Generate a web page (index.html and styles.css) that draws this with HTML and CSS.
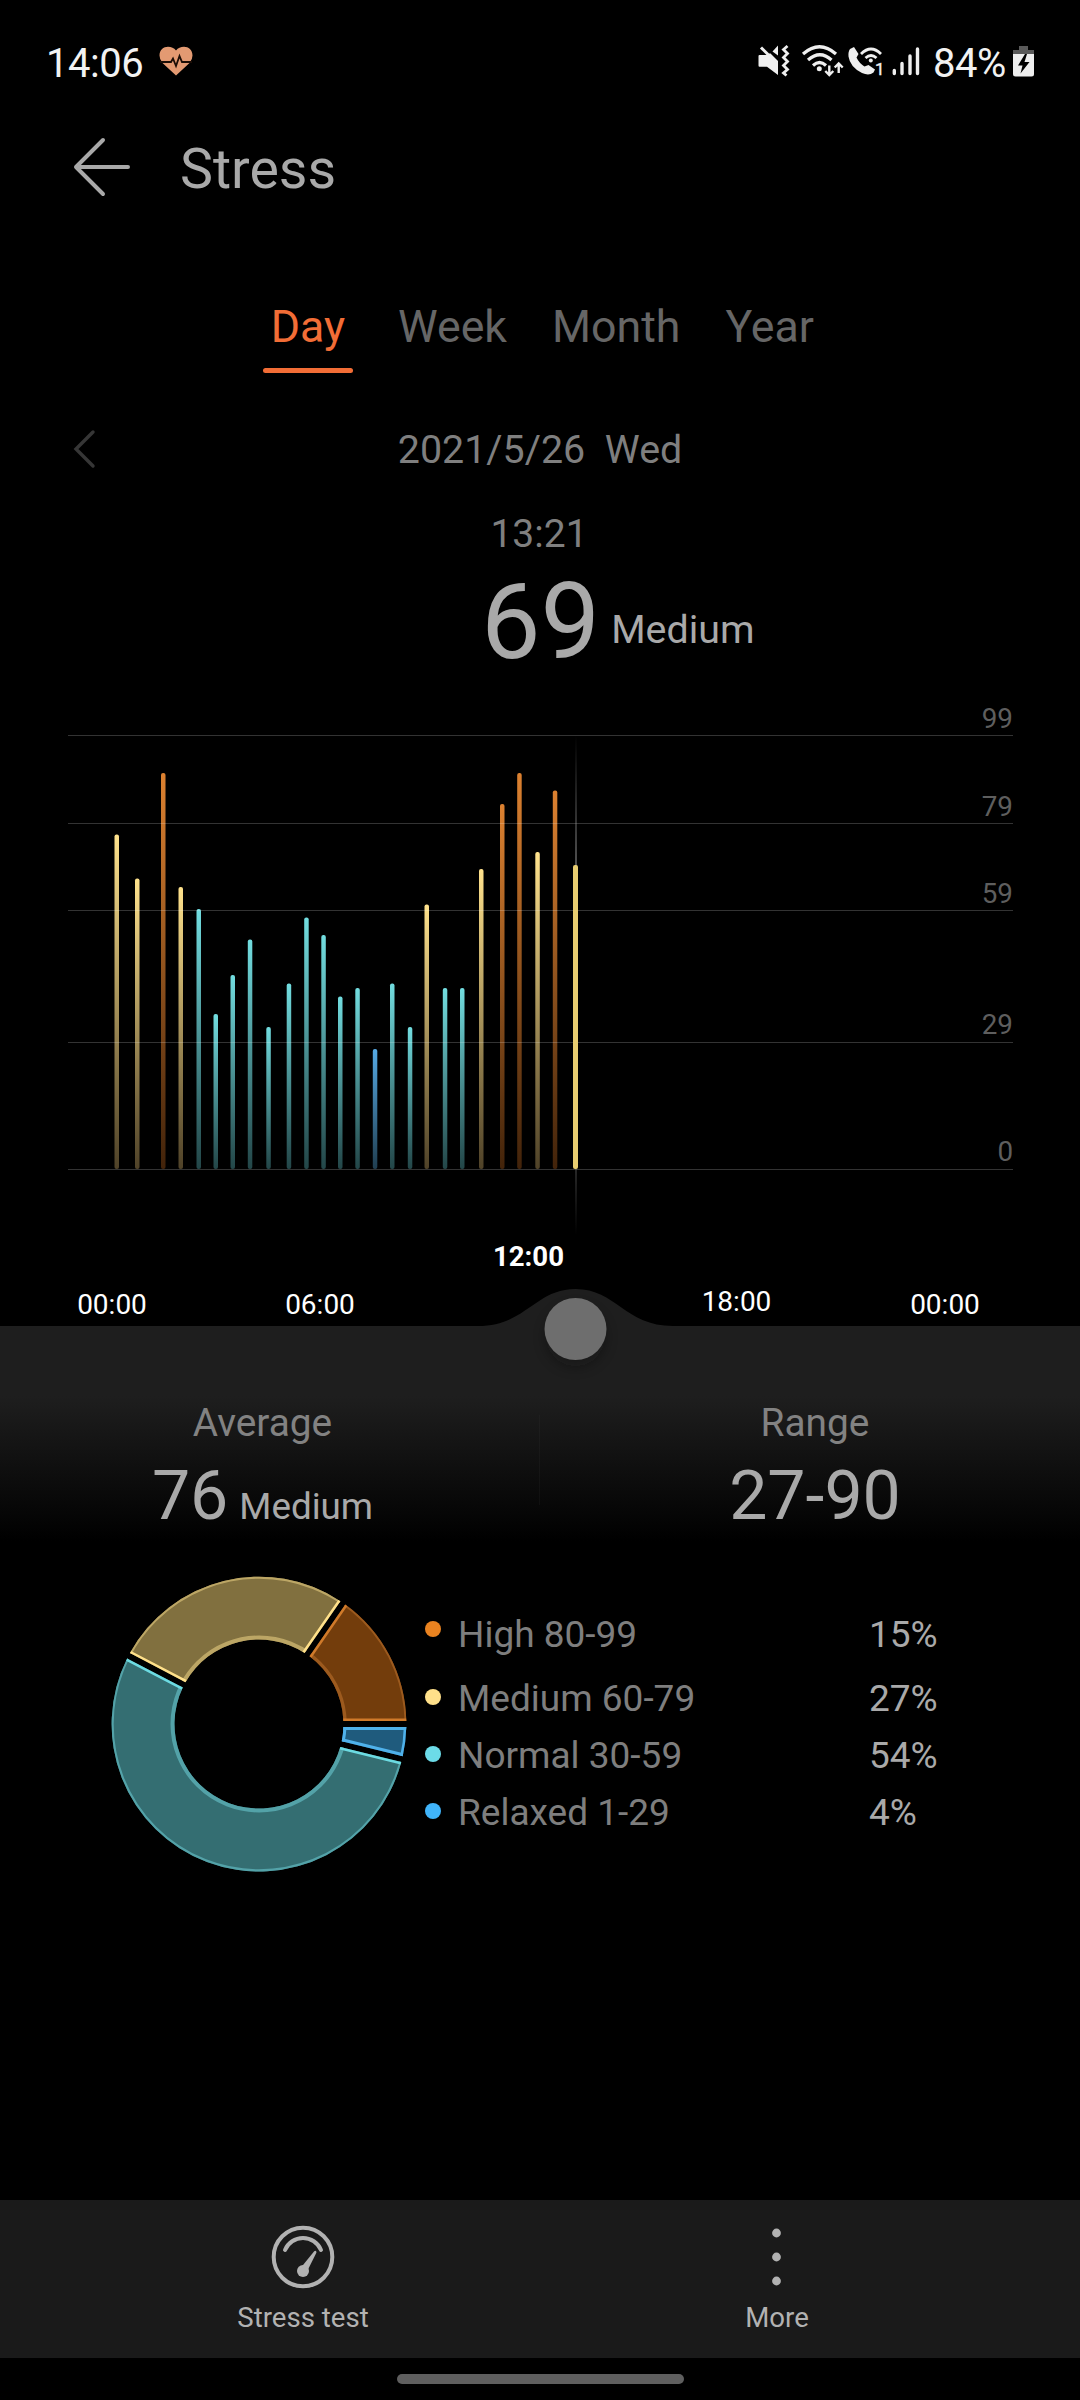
FILE: index.html
```html
<!DOCTYPE html>
<html lang="en">
<head>
<meta charset="utf-8">
<title>Stress</title>
<link rel="stylesheet" href="styles.css">
</head>
<body>
<div class="screen">
  <header class="status">
    <span class="clock">14:06</span>
    <svg class="heart" width="34" height="30" viewBox="0 0 34 30"><path d="M17 29.500L3.500 17Q.5 13.500.5 9.500C.5 4 4.500.8 9 .8Q14 .8 17 4.500Q20 .8 25 .8C29.500.8 33.500 4 33.500 9.500Q33.500 13.500 30.500 17Z" fill="#e39a72"/><path d="M1 16H12L14 12.500L17 20L20.500 10L23 16H33" fill="none" stroke="#1b0d06" stroke-width="1.800"/></svg>
    <svg class="sys" width="164" height="34" viewBox="0 0 164 34" fill="none" stroke="#efefef">
      <path d="M1.500 12H8L20 7V32L9 23.700H1.500Q.5 23.700.5 22.500V13Q.5 12 1.500 12Z" fill="#efefef" stroke="none"/>
      <path d="M4.500 2.500L21 19V0H6Z" fill="#000" stroke="none"/>
      <path d="M3 4.500L19 20.500" stroke-width="3"/>
      <path d="M14.500 8.500L20 2.500V12.500Z" fill="#efefef" stroke="none"/>
      <path d="M29.500 3L25.500 6.500L29.500 10.500L25.500 14.500L29.500 18.500L25.500 22.500L29.500 26.500L25.500 30L28.500 32.500" stroke-width="2.800"/>
      <path d="M45 11Q61.500 -3.500 78 11M50 17Q62 6.500 73.500 17M55 22.500Q61.500 16.500 68 22.500" stroke-width="3.200"/>
      <circle cx="61.300" cy="25.700" r="2.500" fill="#efefef" stroke="none"/>
      <path d="M71.300 22.500V31.500M67.300 28L71.300 32L75.300 28M80.700 30V20.500M76.700 24.500L80.700 20.500L84.700 24.500" stroke-width="2.400"/>
      <path d="M92 6L96 4L100.500 11L98.500 14.500Q101 20 106.500 23.500L110.500 22L117 26.500L115.500 29.500Q111 33 104 30Q92 24 90.500 13.500Q90 8.500 92 6Z" fill="#efefef" stroke="none"/>
      <path d="M103 11Q113 1 123 11M107.500 15Q113 10 118.500 15" stroke-width="2.800"/>
      <circle cx="112.800" cy="17.500" r="2" fill="#efefef" stroke="none"/>
      <text class="sim" x="117" y="31.500">1</text>
      <g stroke-width="3.400" stroke-linecap="round"><path d="M136.300 27.500V30.500M144 20.500V30.500M152 13V30.500M159.500 6V30.500"/></g>
    </svg>
    <span class="battery-text">84%</span>
    <svg class="battery" width="21" height="32" viewBox="0 0 21 32"><path d="M6 1H15V5H21V9H0V5H6Z" fill="#5a5a5a"/><path d="M0 9H21V29Q21 31.500 18.500 31.500H2.500Q0 31.500 0 29Z" fill="#efefef"/><path d="M12 9L5 20.500H9.500L7.500 28.500L16.500 17H11.500L14 9Z" fill="#000"/></svg>
  </header>

  <div class="titlebar">
    <svg width="60" height="60" viewBox="0 0 60 60" fill="none" stroke="#a9a9a9" stroke-width="4" stroke-linecap="round" stroke-linejoin="round"><path d="M31 3L4 30L31 57M4 30H56"/></svg>
    <h1>Stress</h1>
  </div>

  <nav class="tabs">
    <span class="tab active">Day</span><span class="tab">Week</span><span class="tab">Month</span><span class="tab">Year</span>
  </nav>

  <div class="date-row">
    <svg class="prev" width="24" height="40" viewBox="0 0 24 40" fill="none" stroke="#363636" stroke-width="3.400" stroke-linecap="round"><path d="M20 3L3 20L20 37"/></svg>
    <span class="date">2021/5/26&nbsp; Wed</span>
  </div>
  <div class="time">13:21</div>
  <div class="reading"><span class="score">69</span><span class="level">Medium</span></div>

  <svg class="chart" width="1080" height="696" viewBox="0 690 1080 696">
    <defs>
      <linearGradient id="y" x1="0" y1="0" x2="0" y2="1"><stop offset="0" stop-color="#ffe28c"/><stop offset="1" stop-color="#4f4228"/></linearGradient>
      <linearGradient id="o" x1="0" y1="0" x2="0" y2="1"><stop offset="0" stop-color="#dc8130"/><stop offset="1" stop-color="#42230a"/></linearGradient>
      <linearGradient id="t" x1="0" y1="0" x2="0" y2="1"><stop offset="0" stop-color="#72dde0"/><stop offset="1" stop-color="#234648"/></linearGradient>
      <linearGradient id="b" x1="0" y1="0" x2="0" y2="1"><stop offset="0" stop-color="#55a9e4"/><stop offset="1" stop-color="#203e50"/></linearGradient>
      <linearGradient id="cursor" x1="0" y1="0" x2="0" y2="1"><stop offset="0" stop-color="#999" stop-opacity="0"/><stop offset=".4" stop-color="#aaa"/><stop offset=".6" stop-color="#aaa"/><stop offset="1" stop-color="#999" stop-opacity="0"/></linearGradient>
      <filter id="soft" x="-50%" y="-50%" width="200%" height="200%"><feGaussianBlur stdDeviation="7"/></filter>
    </defs>
    <g class="bars">
      <rect x="114.500" y="834.500" width="4.500" height="334.500" rx="2" fill="url(#y)"/>
      <rect x="135" y="878.500" width="4.500" height="290.500" rx="2" fill="url(#y)"/>
      <rect x="161" y="773" width="4.500" height="396" rx="2" fill="url(#o)"/>
      <rect x="178.500" y="887" width="4.500" height="282" rx="2" fill="url(#y)"/>
      <rect x="196.500" y="909" width="4.500" height="260" rx="2" fill="url(#t)"/>
      <rect x="213.500" y="1014" width="4.500" height="155" rx="2" fill="url(#t)"/>
      <rect x="230.500" y="975" width="4.500" height="194" rx="2" fill="url(#t)"/>
      <rect x="247.800" y="939.500" width="4.500" height="229.500" rx="2" fill="url(#t)"/>
      <rect x="266.300" y="1027" width="4.500" height="142" rx="2" fill="url(#t)"/>
      <rect x="286.700" y="983.500" width="4.500" height="185.500" rx="2" fill="url(#t)"/>
      <rect x="304.200" y="917.500" width="4.500" height="251.500" rx="2" fill="url(#t)"/>
      <rect x="321.300" y="935" width="4.500" height="234" rx="2" fill="url(#t)"/>
      <rect x="338" y="996.500" width="4.500" height="172.500" rx="2" fill="url(#t)"/>
      <rect x="355.300" y="988" width="4.500" height="181" rx="2" fill="url(#t)"/>
      <rect x="372.800" y="1049" width="4.500" height="120" rx="2" fill="url(#b)"/>
      <rect x="390" y="983.500" width="4.500" height="185.500" rx="2" fill="url(#t)"/>
      <rect x="407.800" y="1027" width="4.500" height="142" rx="2" fill="url(#t)"/>
      <rect x="424.500" y="904.500" width="4.500" height="264.500" rx="2" fill="url(#y)"/>
      <rect x="442.800" y="988" width="4.500" height="181" rx="2" fill="url(#t)"/>
      <rect x="460" y="988" width="4.500" height="181" rx="2" fill="url(#t)"/>
      <rect x="479" y="869" width="4.500" height="300" rx="2" fill="url(#y)"/>
      <rect x="500" y="804" width="4.500" height="365" rx="2" fill="url(#o)"/>
      <rect x="517.200" y="773" width="4.500" height="396" rx="2" fill="url(#o)"/>
      <rect x="535.300" y="852" width="4.500" height="317" rx="2" fill="url(#y)"/>
      <rect x="552.800" y="790.500" width="4.500" height="378.500" rx="2" fill="url(#o)"/>
    </g>
    <path class="grid" d="M68 735.500H1013M68 823.500H1013M68 910.500H1013M68 1042.500H1013M68 1169.500H1013"/>
    <rect x="575" y="735" width="2" height="500" fill="url(#cursor)" opacity=".75"/>
    <rect x="573" y="865" width="5" height="304" rx="2" fill="#e8cd70"/>
    <g class="ylabels"><text x="1013" y="727.500">99</text><text x="1013" y="815.500">79</text><text x="1013" y="902.500">59</text><text x="1013" y="1033.500">29</text><text x="1013" y="1160.500">0</text></g>
    <g class="xlabels"><text x="112" y="1314">00:00</text><text x="320" y="1314">06:00</text><text class="current" x="528.500" y="1266">12:00</text><text x="736.500" y="1311">18:00</text><text x="945" y="1314">00:00</text></g>
    <path d="M0 1326H478C526 1326 535 1289 575.500 1289S625 1326 673 1326H1080V1386H0Z" fill="#1e1e1e"/>
    <circle cx="575.500" cy="1337" r="29" fill="#111" opacity=".4" filter="url(#soft)"/>
    <circle cx="575.500" cy="1329" r="31" fill="#6e6e6e"/>
  </svg>

  <section class="summary">
    <div class="stat"><span class="stat-name">Average</span><span class="stat-value">76<small>Medium</small></span></div>
    <div class="divider"></div>
    <div class="stat"><span class="stat-name">Range</span><span class="stat-value">27-90</span></div>
  </section>

  <section class="breakdown">
    <svg class="donut" width="296" height="296" viewBox="-148 -148 296 296" fill="none">
      <defs>
        <clipPath id="co"><path d="M84.400 -3L147.300 -3A147.300 147.300 0 0 0 86.300 -119.400L50.500 -67.700A84.500 84.500 0 0 1 84.400 -3Z"/></clipPath>
        <clipPath id="cy"><path d="M45.600 -71.100L81.400 -122.800A147.300 147.300 0 0 0 -129.100 -70.900L-73.500 -41.800A84.500 84.500 0 0 1 45.600 -71.100Z"/></clipPath>
        <clipPath id="ct"><path d="M-76.200 -36.500L-131.900 -65.500A147.300 147.300 0 1 0 142.300 38L81.300 23A84.500 84.500 0 1 1 -76.200 -36.500Z"/></clipPath>
        <clipPath id="cb"><path d="M82.700 17.200L143.700 32.200A147.300 147.300 0 0 0 147.300 3L84.400 3A84.500 84.500 0 0 1 82.700 17.200Z"/></clipPath>
      </defs>
      <g clip-path="url(#co)"><rect x="-148" y="-148" width="296" height="296" fill="#733d0c"/><g stroke="#9c5a1e"><circle r="147.300" stroke-width="3.500"/><circle r="84.500" stroke-width="6.500"/></g><path d="M80 -3H150M50.500 -67.700L86.300 -119.400" stroke="#d07a2a" stroke-width="5"/></g>
      <g clip-path="url(#cy)"><rect x="-148" y="-148" width="296" height="296" fill="#81703f"/><g stroke="#bca665"><circle r="147.300" stroke-width="4"/><circle r="84.500" stroke-width="8"/></g><path d="M45.600 -71.100L81.400 -122.800M-129.100 -70.900L-73.500 -41.800" stroke="#ffe08a" stroke-width="5"/></g>
      <g clip-path="url(#ct)"><rect x="-148" y="-148" width="296" height="296" fill="#346e72"/><g stroke="#53a2a8"><circle r="147.300" stroke-width="4"/><circle r="84.500" stroke-width="8"/></g><path d="M-76.200 -36.500L-131.900 -65.500M142.300 38L81.300 23" stroke="#6cdbe2" stroke-width="5"/></g>
      <g clip-path="url(#cb)"><rect x="-148" y="-148" width="296" height="296" fill="#1f5b7d"/><g stroke="#4fb1ea"><circle r="147.300" stroke-width="5"/><circle r="84.500" stroke-width="6"/></g><path d="M82.700 17.200L143.700 32.200M80 3H150" stroke="#4fb1ea" stroke-width="6"/></g>
    </svg>
    <ul class="legend">
      <li class="first"><i class="dot high"></i><span>High 80-99</span><b>15%</b></li>
      <li><i class="dot medium"></i><span>Medium 60-79</span><b>27%</b></li>
      <li><i class="dot normal"></i><span>Normal 30-59</span><b>54%</b></li>
      <li><i class="dot relaxed"></i><span>Relaxed 1-29</span><b>4%</b></li>
    </ul>
  </section>

  <footer class="toolbar">
    <div class="tool">
      <svg width="64" height="64" viewBox="0 0 64 64" fill="none" stroke="#b2b2b2" stroke-width="4" stroke-linecap="round"><circle cx="32" cy="32" r="29.300"/><path d="M14 25A19.500 19.500 0 0 1 50 25"/><circle cx="32" cy="46" r="6" fill="#b2b2b2" stroke="none"/><path d="M30 42.500L43 26.500Q44.500 25 45.300 26.500Q45.700 27.500 45 28.500L37 44.500Z" fill="#b2b2b2" stroke="none"/></svg>
      <span>Stress test</span>
    </div>
    <div class="tool">
      <svg width="64" height="64" viewBox="0 0 64 64" fill="#b2b2b2"><circle cx="31.500" cy="8" r="4.400"/><circle cx="31.500" cy="32" r="4.400"/><circle cx="31.500" cy="56" r="4.400"/></svg>
      <span>More</span>
    </div>
  </footer>
  <div class="gesture"><span></span></div>
</div>
</body>
</html>
```
FILE: styles.css
```css
* { box-sizing: border-box; }
body { margin: 0; background: #000; font-family: Roboto, "Liberation Sans", sans-serif; color: #a9a9a9; }
.screen { width: 1080px; height: 2400px; display: flex; flex-direction: column; overflow: hidden; background: #000; }

.status { height: 124px; padding: 0 46px; display: flex; align-items: flex-start; font-size: 40px; line-height: 48px; color: #f2f2f2; }
.clock { margin-top: 40px; width: 100px; letter-spacing: -.5px; }
.heart { margin: 46px 0 0 13px; }
.sys { margin: 43px 0 0 565px; }
.sim { font-size: 17px; fill: #efefef; stroke: #efefef; stroke-width: .4px; }
.battery-text { margin-top: 40px; margin-left: 11px; width: 77px; letter-spacing: -.5px; }
.battery { margin: 45px 0 0 3px; }

.titlebar { height: 160px; padding: 13px 72px; display: flex; gap: 48px; align-items: flex-start; }
.titlebar h1 { margin: 1px 0 0; font-size: 55.500px; line-height: 64px; font-weight: 400; }

.tabs { height: 112px; padding-left: 263px; display: flex; align-items: flex-start; font-size: 44.700px; line-height: 52px; color: #666; }
.tab { height: 89px; padding-top: 17px; margin-left: 45px; }
.tab.active { width: 90px; margin-left: 0; text-align: center; color: #f26d36; position: relative; }
.tab.active::after { content: ""; position: absolute; left: 0; right: 0; bottom: 0; height: 5px; border-radius: 3px; background: #f26d36; }

.date-row { height: 100px; padding: 31px 0 0 73px; display: grid; grid-template-columns: 24px 1fr 97px; align-items: start; font-size: 39.400px; line-height: 46px; color: #7f7f7f; }
.prev { margin-top: 2px; }
.date { text-align: center; }
.time { height: 62px; padding-top: 15px; text-align: center; font-size: 39px; line-height: 46px; color: #7f7f7f; text-indent: -2px; }
.reading { height: 132px; padding-left: 481px; display: flex; align-items: flex-start; gap: 11px; }
.score { font-size: 106px; line-height: 124px; margin-top: 2px; }
.level { font-size: 39.400px; line-height: 46px; margin-top: 49px; }

.chart { display: block; flex: none; }
.grid { stroke: #fff; stroke-opacity: .2; stroke-width: 1; fill: none; }
.ylabels { font-size: 27.800px; fill: #5e5e5e; text-anchor: end; }
.xlabels { font-size: 28px; fill: #fff; text-anchor: middle; }
.current { font-weight: 700; font-size: 27.600px; }

.summary { height: 170px; display: grid; grid-template-columns: 525px 30px 520px; background: linear-gradient(#1e1e1e 10px, #000 155px); }
.stat { display: flex; flex-direction: column; align-items: center; padding-top: 14px; }
.stat-name { font-size: 38.800px; line-height: 46px; color: #828282; }
.stat-value { font-size: 68px; line-height: 80px; margin-top: 10px; }
.stat-value small { font-size: 36.750px; margin-left: 11px; }
.divider { width: 1px; height: 90px; margin: 29px 0 0 14px; background: rgba(70, 70, 70, .12); }

.breakdown { height: 644px; padding: 20px 0 0 111px; display: flex; align-items: flex-start; }
.legend { list-style: none; margin: 38px 0 0 18px; padding: 0; font-size: 37px; line-height: 42px; color: #7e7e7e; }
.legend li { display: grid; grid-template-columns: 33px 411px 100px; height: 57px; align-items: start; }
.legend .first { height: 64px; }
.legend b { font-weight: 400; color: #a9a9a9; }
.dot { width: 16px; height: 16px; border-radius: 50%; margin-top: 11px; }
.first .dot { margin-top: 7px; }
.high { background: #ea8320; }
.medium { background: #ffe08a; }
.normal { background: #6cdbe8; }
.relaxed { background: #40b4fa; }

.toolbar { height: 158px; padding: 25px 66px 0; display: grid; grid-template-columns: 1fr 1fr; background: #1a1a1a; }
.tool { display: flex; flex-direction: column; align-items: center; font-size: 27.600px; line-height: 34px; color: #b2b2b2; }
.tool span { margin-top: 12px; }
.gesture { height: 42px; display: flex; justify-content: center; padding-top: 16px; }
.gesture span { width: 287px; height: 10px; border-radius: 5px; background: #5f5f5f; }
```
